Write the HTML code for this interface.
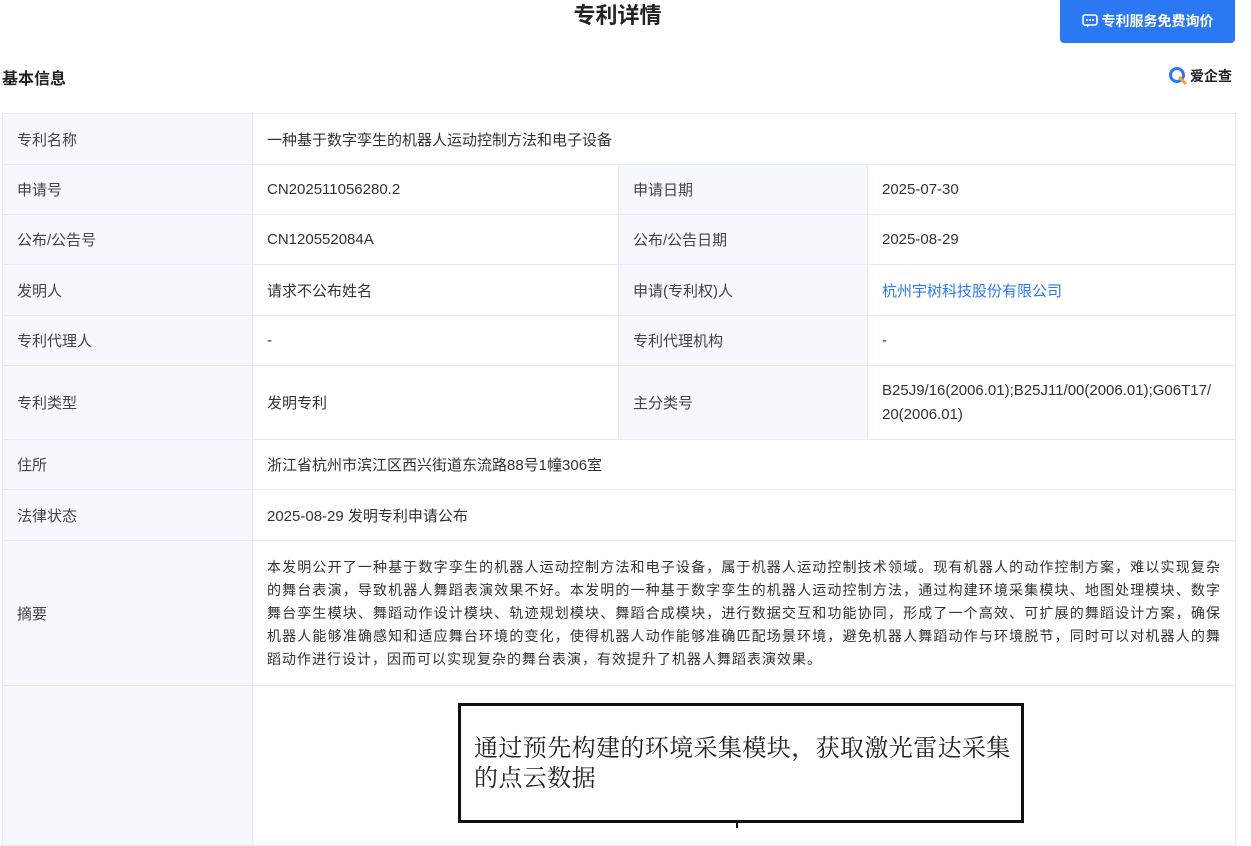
<!DOCTYPE html>
<html><head><meta charset="utf-8"><style>
*{margin:0;padding:0;box-sizing:border-box}
body{width:1251px;height:828px;overflow:hidden;background:#fff;font-family:"Liberation Sans","Noto Sans CJK SC",sans-serif;color:#333;position:relative}
.title{position:absolute;left:0;width:1235px;top:1px;text-align:center;font-size:22px;font-weight:bold;color:#222;line-height:30px}
.btn{position:absolute;left:1060px;top:0;width:175px;height:43px;background:#2b78f5;border-radius:0 0 4px 4px;color:#fff;font-size:14px;font-weight:bold;line-height:43px;text-align:center}
.sec{position:absolute;left:2px;top:65px;font-size:16px;font-weight:bold;color:#222}
.aqc{position:absolute;left:1168px;top:66px;font-size:14px;color:#222;font-weight:bold;display:flex;align-items:center;gap:2px}
table{position:absolute;left:2px;top:113px;width:1233px;border-collapse:collapse;font-size:15px;table-layout:fixed}
td{border:1px solid #e6ebf3;padding:0 14px;vertical-align:middle;color:#333}
td.l{background:#f5f8fd;color:#444}
a{color:#2b78f5;text-decoration:none}
.abs{line-height:23px;text-align:justify;padding:4px 14px;font-size:14px;letter-spacing:1px}
.img{position:absolute;left:458px;top:703px;width:566px;height:120px;border:3px solid #111;font-family:"Liberation Serif","Noto Serif CJK SC",serif;font-size:24px;letter-spacing:0.4px;line-height:30px;padding:28px 0 0 13px;color:#222;white-space:nowrap}
.vl{position:absolute;left:736px;top:822px;width:2px;height:6px;background:#111}
</style></head><body>
<div class="title">专利详情</div>
<div class="btn"><svg width="16" height="14" viewBox="0 0 16 14" style="vertical-align:-2px;margin-right:4px"><rect x="1" y="1" width="14" height="10" rx="2" fill="none" stroke="#fff" stroke-width="1.6"/><path d="M5 11 L5 13.5 L8 11" fill="#fff"/><circle cx="5" cy="6" r="1" fill="#fff"/><circle cx="8" cy="6" r="1" fill="#fff"/><circle cx="11" cy="6" r="1" fill="#fff"/></svg>专利服务免费询价</div>
<div class="sec">基本信息</div>
<div class="aqc"><svg width="20" height="20" viewBox="0 0 20 20"><circle cx="9" cy="9" r="6.5" fill="none" stroke="#2b78f5" stroke-width="3"/><path d="M12 12 L17 17" stroke="#f5a623" stroke-width="3" stroke-linecap="round"/></svg>爱企查</div>
<table>
<colgroup><col style="width:250px"><col style="width:366px"><col style="width:249px"><col style="width:368px"></colgroup>
<tr style="height:51px"><td class="l">专利名称</td><td colspan="3">一种基于数字孪生的机器人运动控制方法和电子设备</td></tr>
<tr style="height:50px"><td class="l">申请号</td><td>CN202511056280.2</td><td class="l">申请日期</td><td>2025-07-30</td></tr>
<tr style="height:50px"><td class="l">公布/公告号</td><td>CN120552084A</td><td class="l">公布/公告日期</td><td>2025-08-29</td></tr>
<tr style="height:51px"><td class="l">发明人</td><td>请求不公布姓名</td><td class="l">申请(专利权)人</td><td><a>杭州宇树科技股份有限公司</a></td></tr>
<tr style="height:50px"><td class="l">专利代理人</td><td>-</td><td class="l">专利代理机构</td><td>-</td></tr>
<tr style="height:74px"><td class="l">专利类型</td><td>发明专利</td><td class="l">主分类号</td><td style="line-height:24px">B25J9/16(2006.01);B25J11/00(2006.01);G06T17/<br>20(2006.01)</td></tr>
<tr style="height:50px"><td class="l">住所</td><td colspan="3">浙江省杭州市滨江区西兴街道东流路88号1幢306室</td></tr>
<tr style="height:51px"><td class="l">法律状态</td><td colspan="3">2025-08-29 发明专利申请公布</td></tr>
<tr style="height:145px"><td class="l">摘要</td><td colspan="3" class="abs">本发明公开了一种基于数字孪生的机器人运动控制方法和电子设备，属于机器人运动控制技术领域。现有机器人的动作控制方案，难以实现复杂的舞台表演，导致机器人舞蹈表演效果不好。本发明的一种基于数字孪生的机器人运动控制方法，通过构建环境采集模块、地图处理模块、数字舞台孪生模块、舞蹈动作设计模块、轨迹规划模块、舞蹈合成模块，进行数据交互和功能协同，形成了一个高效、可扩展的舞蹈设计方案，确保机器人能够准确感知和适应舞台环境的变化，使得机器人动作能够准确匹配场景环境，避免机器人舞蹈动作与环境脱节，同时可以对机器人的舞蹈动作进行设计，因而可以实现复杂的舞台表演，有效提升了机器人舞蹈表演效果。</td></tr>
<tr style="height:160px"><td class="l"></td><td colspan="3"></td></tr>
</table>
<div class="img">通过预先构建的环境采集模块，获取激光雷达采集<br>的点云数据</div>
<div class="vl"></div>
</body></html>
